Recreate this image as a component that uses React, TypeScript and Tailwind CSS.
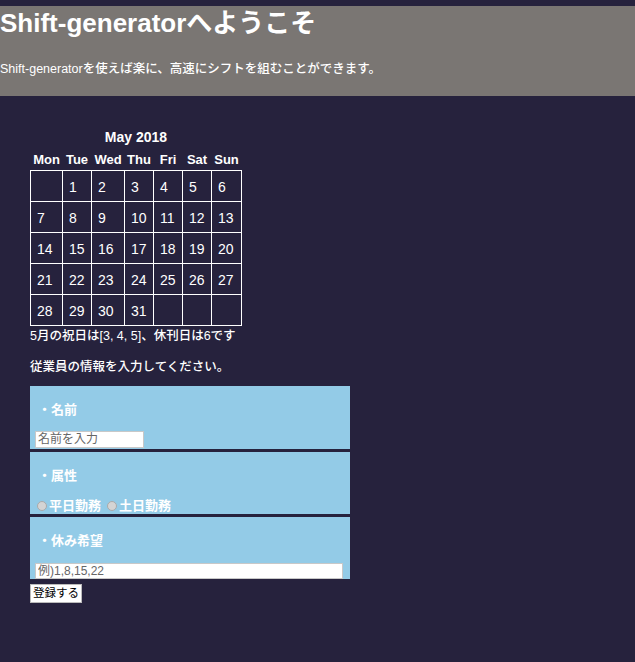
import React from "react";

const font = { fontFamily: '"Liberation Sans", "Noto Sans CJK JP", sans-serif' };

const weeks: (number | null)[][] = [
  [null, 1, 2, 3, 4, 5, 6],
  [7, 8, 9, 10, 11, 12, 13],
  [14, 15, 16, 17, 18, 19, 20],
  [21, 22, 23, 24, 25, 26, 27],
  [28, 29, 30, 31, null, null, null],
];
const days = ["Mon", "Tue", "Wed", "Thu", "Fri", "Sat", "Sun"];
const widths = ["w-[32px]", "w-[29px]", "w-[33px]", "w-[29px]", "w-[29px]", "w-[29px]", "w-[30px]"];

export default function App() {
  return (
    <div className="min-h-[662px] bg-[#26223d] pt-[6px] text-white" style={font}>
      <div className="h-[90px] bg-[#7a7673] flex flex-col">
        <h1 className="text-[26px] font-bold leading-[32px] mt-[1px]">Shift-generatorへようこそ</h1>
        <p className="text-[12.5px] leading-[16px] mt-[22px] font-medium">
          Shift-generatorを使えば楽に、高速にシフトを組むことができます。
        </p>
      </div>

      <div className="pl-[30px] pt-[31px]">
        <table className="border-collapse">
          <caption className="text-[14px] font-bold leading-[18px] h-[20px] pt-[1px]">May 2018</caption>
          <thead>
            <tr className="h-[23px]">
              {days.map((d, i) => (
                <th key={d} className={`${widths[i]} text-[13px] font-bold text-center pt-[3px] pb-0 px-0 leading-[16px] align-middle`}>
                  {d}
                </th>
              ))}
            </tr>
          </thead>
          <tbody>
            {weeks.map((w, ri) => (
              <tr key={ri} className="h-[31px]">
                {w.map((n, ci) => (
                  <td
                    key={ci}
                    className="border border-white text-[14px] leading-[16px] pl-[6px] pr-0 pt-[2px] pb-0 align-middle text-left font-medium"
                  >
                    {n ?? ""}
                  </td>
                ))}
              </tr>
            ))}
          </tbody>
        </table>
        <p className="text-[12.5px] leading-[16px] mt-[2px] font-medium">5月の祝日は[3, 4, 5]、休刊日は6です</p>
        <p className="text-[12.5px] leading-[16px] mt-[15px] font-medium">従業員の情報を入力してください。</p>

        <div className="mt-[11px] w-[320px] flex flex-col gap-[3px]">
          <div className="bg-[#93cbe7] h-[63px] flex flex-col pl-[5px]">
            <div className="text-[13px] font-bold leading-[16px] mt-[16px] pl-[3px]">・名前</div>
            <input
              className="mt-[13px] w-[109px] h-[17px] bg-white border border-[#c8c8c8] text-[12px] text-[#555] placeholder:text-[#666] px-[2px] leading-[15px] outline-none"
              placeholder="名前を入力"
            />
          </div>
          <div className="bg-[#93cbe7] h-[62px] flex flex-col pl-[7px]">
            <div className="text-[13px] font-bold leading-[16px] mt-[16px] pl-[1px]">・属性</div>
            <div className="flex items-center mt-[14px] text-[13px] font-bold leading-[16px]">
              <span className="w-[10px] h-[10px] rounded-full bg-[#d4d4d4] border border-[#aaa] mr-[2px]" />
              <span>平日勤務</span>
              <span className="w-[10px] h-[10px] rounded-full bg-[#d4d4d4] border border-[#aaa] ml-[6px] mr-[2px]" />
              <span>土日勤務</span>
            </div>
          </div>
          <div className="bg-[#93cbe7] h-[62px] flex flex-col pl-[5px]">
            <div className="text-[13px] font-bold leading-[16px] mt-[16px] pl-[3px]">・休み希望</div>
            <input
              className="mt-[14px] w-[308px] h-[17px] bg-white border border-[#c8c8c8] text-[12px] text-[#555] placeholder:text-[#666] px-[2px] leading-[15px] outline-none"
              placeholder="例)1,8,15,22"
            />
          </div>
        </div>
        <button className="mt-[5px] w-[52px] h-[19px] bg-white border border-[#bbb] text-black text-[11.5px] leading-[14px] flex items-center justify-center">
          登録する
        </button>
      </div>
    </div>
  );
}
